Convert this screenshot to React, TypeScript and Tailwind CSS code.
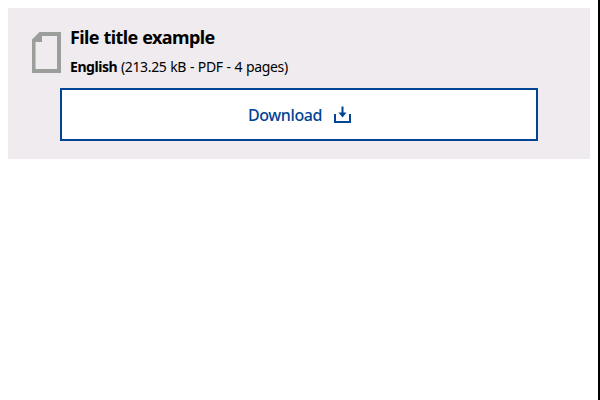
function FileIcon() {
  return (
    <svg className="h-[41px] w-[29px] shrink-0" viewBox="0 0 29 41" fill="#9c9e9b">
      <path fillRule="evenodd" d="M7.5 0H29V41H0V7.5ZM10 4V10H3.5V37H25V4Z" />
    </svg>
  );
}

function DownloadIcon() {
  return (
    <svg className="h-[17px] w-[17px] shrink-0" viewBox="0 0 17 17" fill="#004494">
      <path d="M0 8H2V15H15V8H17V17H0Z" />
      <path d="M7.5 0.5H9.5V6.5H12.5L8.5 11.5L4.5 6.5H7.5Z" />
    </svg>
  );
}

export default function App() {
  return (
    <div className="h-[400px] w-[600px] border-r-2 border-black bg-white p-2 font-['Noto_Sans','Open_Sans',sans-serif]">
      <section className="h-[151px] w-[582px] bg-[#efebee] pt-[17px]">
        <div className="flex h-[63px] pl-6">
          <div className="mr-[9px] pt-[7px]">
            <FileIcon />
          </div>
          <div className="whitespace-nowrap text-black">
            <h1 className="h-[24px] text-[18px] leading-[24px] font-bold tracking-[-0.6px] [word-spacing:0.5px]">File title example</h1>
            <p className="mt-[8px] h-[20px] text-[14px] leading-[20px] tracking-[-0.35px] [word-spacing:0.5px]">
              <strong className="font-bold tracking-[-0.45px]">English</strong> (213.25 kB - PDF - 4 pages)
            </p>
          </div>
        </div>
        <button className="ml-[52px] flex h-[53px] w-[478px] items-center border-2 border-[#004494] bg-white pl-[186px] text-[#004494]">
          <span className="w-[86px] text-left text-[16px] leading-[24px] font-medium tracking-[-0.4px]">Download</span>
          <DownloadIcon />
        </button>
      </section>
    </div>
  );
}
